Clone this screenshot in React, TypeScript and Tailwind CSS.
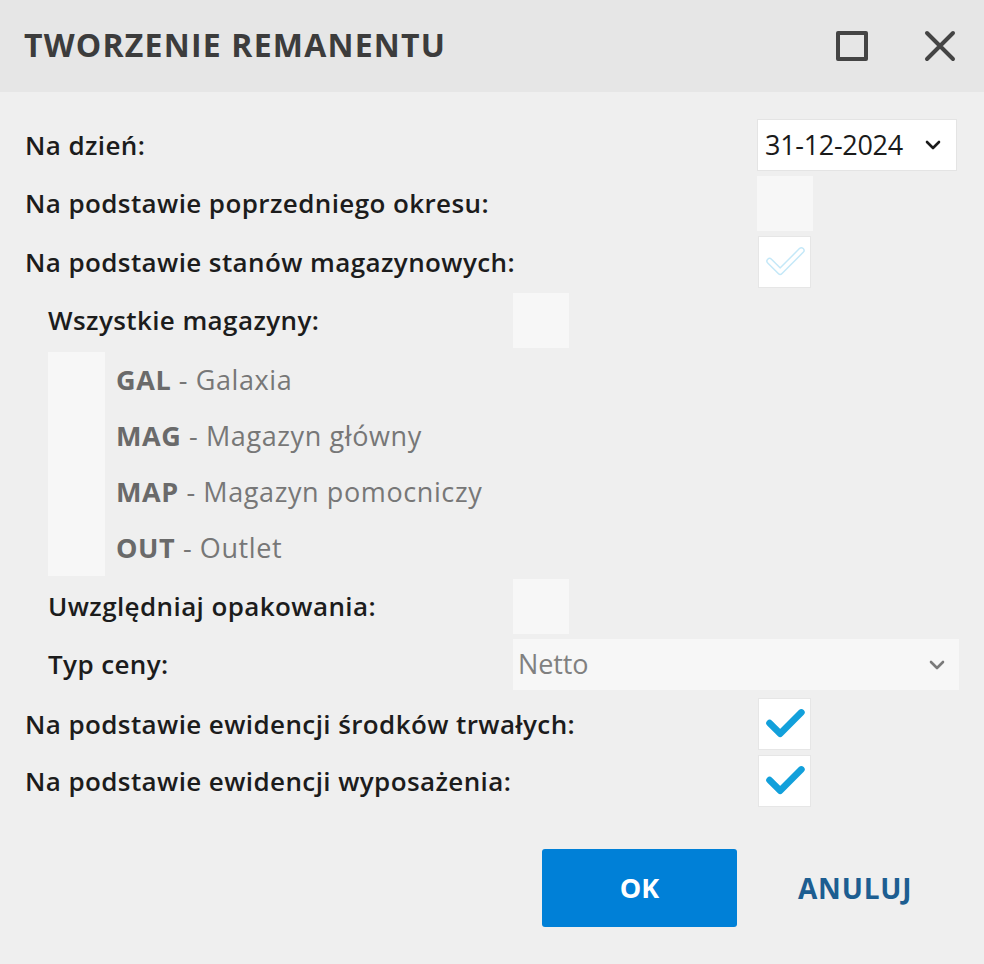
import React from 'react';

const font = { fontFamily: '"Open Sans", "Noto Sans", sans-serif' };

const Check = ({ disabled }: { disabled?: boolean }) => (
  <svg width="53" height="52" viewBox="0 0 53 52" fill="none">
    {disabled ? (
      <>
        <path d="M11 25 L22 36 L44 14" stroke="#c4e8f8" strokeWidth="7" strokeLinecap="round" strokeLinejoin="round" />
        <path d="M11 25 L22 36 L44 14" stroke="#ffffff" strokeWidth="4" strokeLinecap="round" strokeLinejoin="round" />
      </>
    ) : (
      <path d="M11 25 L22 36 L44 14" stroke="#12a0db" strokeWidth="7" strokeLinecap="round" strokeLinejoin="round" />
    )}
  </svg>
);

const Chevron = ({ color }: { color: string }) => (
  <svg width="18" height="12" viewBox="0 0 18 12" fill="none">
    <path d="M3 3 L9 9 L15 3" stroke={color} strokeWidth="2.6" strokeLinecap="round" strokeLinejoin="round" />
  </svg>
);

const Label = ({ children, indent }: { children: React.ReactNode; indent?: boolean }) => (
  <span className={`text-[26px] font-semibold text-[#1c1c1c] tracking-[0.4px] ${indent ? 'pl-[23px]' : ''}`}>{children}</span>
);

const warehouses = [
  { code: 'GAL', name: 'Galaxia' },
  { code: 'MAG', name: 'Magazyn główny' },
  { code: 'MAP', name: 'Magazyn pomocniczy' },
  { code: 'OUT', name: 'Outlet' },
];

export default function App() {
  return (
    <div className="w-[984px] h-[964px] bg-[#efefef] flex flex-col" style={font}>
      {/* header */}
      <div className="h-[92px] bg-[#e6e6e6] flex items-center justify-between pl-[24px] pr-[28px]">
        <h1 className="text-[32px] font-bold text-[#3c3c3c] tracking-[1.2px] pb-[2px]">TWORZENIE REMANENTU</h1>
        <div className="flex items-center gap-[56px]">
          <div className="w-[32px] h-[30px] border-[4px] border-[#444] rounded-[2px]" />
          <svg width="32" height="32" viewBox="0 0 32 32" fill="none">
            <path d="M3 3 L29 29 M29 3 L3 29" stroke="#444" strokeWidth="4" strokeLinecap="round" />
          </svg>
        </div>
      </div>

      {/* form */}
      <div className="flex flex-col pl-[25px] pr-[25px] pt-[27px]">
        <div className="h-[52px] flex items-center justify-between">
          <Label>Na dzień:</Label>
          <div className="w-[200px] h-[52px] mr-[2px] bg-white border border-[#e4e4e4] flex items-center justify-between pl-[7px] pr-[14px]">
            <span className="text-[27px] text-[#1a1a1a] tracking-[-0.3px]">31-12-2024</span>
            <Chevron color="#1a1a1a" />
          </div>
        </div>

        <div className="h-[55px] mt-[5px] flex items-center">
          <Label>Na podstawie poprzedniego okresu:</Label>
          <div className="ml-auto mr-[146px] w-[56px] h-[55px] bg-[#f7f7f7]" />
        </div>

        <div className="h-[52px] mt-[5px] flex items-center">
          <Label>Na podstawie stanów magazynowych:</Label>
          <div className="ml-auto mr-[148px] w-[53px] h-[52px] bg-white border border-[#e6e6e6] flex items-center justify-center">
            <Check disabled />
          </div>
        </div>

        <div className="h-[55px] mt-[5px] flex items-center">
          <div className="w-[488px]">
            <Label indent>Wszystkie magazyny:</Label>
          </div>
          <div className="w-[56px] h-[55px] bg-[#f7f7f7]" />
        </div>

        <div className="mt-[4px] pl-[23px] flex">
          <div className="w-[57px] h-[224px] bg-[#f7f7f7]" />
          <div className="flex flex-col pl-[11px]">
            {warehouses.map((w) => (
              <div key={w.code} className="h-[56px] flex items-center text-[27px] text-[#777] tracking-[0.6px]">
                <span className="font-bold text-[#6a6a6a]">{w.code}</span>
                <span>&nbsp;- {w.name}</span>
              </div>
            ))}
          </div>
        </div>

        <div className="h-[55px] mt-[3px] flex items-center">
          <div className="w-[488px]">
            <Label indent>Uwzględniaj opakowania:</Label>
          </div>
          <div className="w-[56px] h-[55px] bg-[#f7f7f7]" />
        </div>

        <div className="h-[51px] mt-[5px] flex items-center">
          <div className="w-[488px]">
            <Label indent>Typ ceny:</Label>
          </div>
          <div className="w-[446px] h-[51px] bg-[#f7f7f7] flex items-center justify-between pl-[5px] pr-[13px]">
            <span className="text-[27px] text-[#808080] tracking-[-0.1px]">Netto</span>
            <Chevron color="#7a7a7a" />
          </div>
        </div>

        <div className="h-[52px] mt-[8px] flex items-center">
          <Label>Na podstawie ewidencji środków trwałych:</Label>
          <div className="ml-auto mr-[148px] w-[53px] h-[52px] bg-white border border-[#e6e6e6] flex items-center justify-center">
            <Check />
          </div>
        </div>

        <div className="h-[52px] mt-[5px] flex items-center">
          <Label>Na podstawie ewidencji wyposażenia:</Label>
          <div className="ml-auto mr-[148px] w-[53px] h-[52px] bg-white border border-[#e6e6e6] flex items-center justify-center">
            <Check />
          </div>
        </div>

        {/* buttons */}
        <div className="mt-[42px] flex items-center">
          <button className="ml-[517px] w-[195px] h-[78px] bg-[#0080d7] rounded-[3px] text-white text-[27px] font-bold">
            OK
          </button>
          <button className="ml-[61px] text-[28px] font-bold text-[#1d5e91] tracking-[0.8px]">ANULUJ</button>
        </div>
      </div>
    </div>
  );
}
